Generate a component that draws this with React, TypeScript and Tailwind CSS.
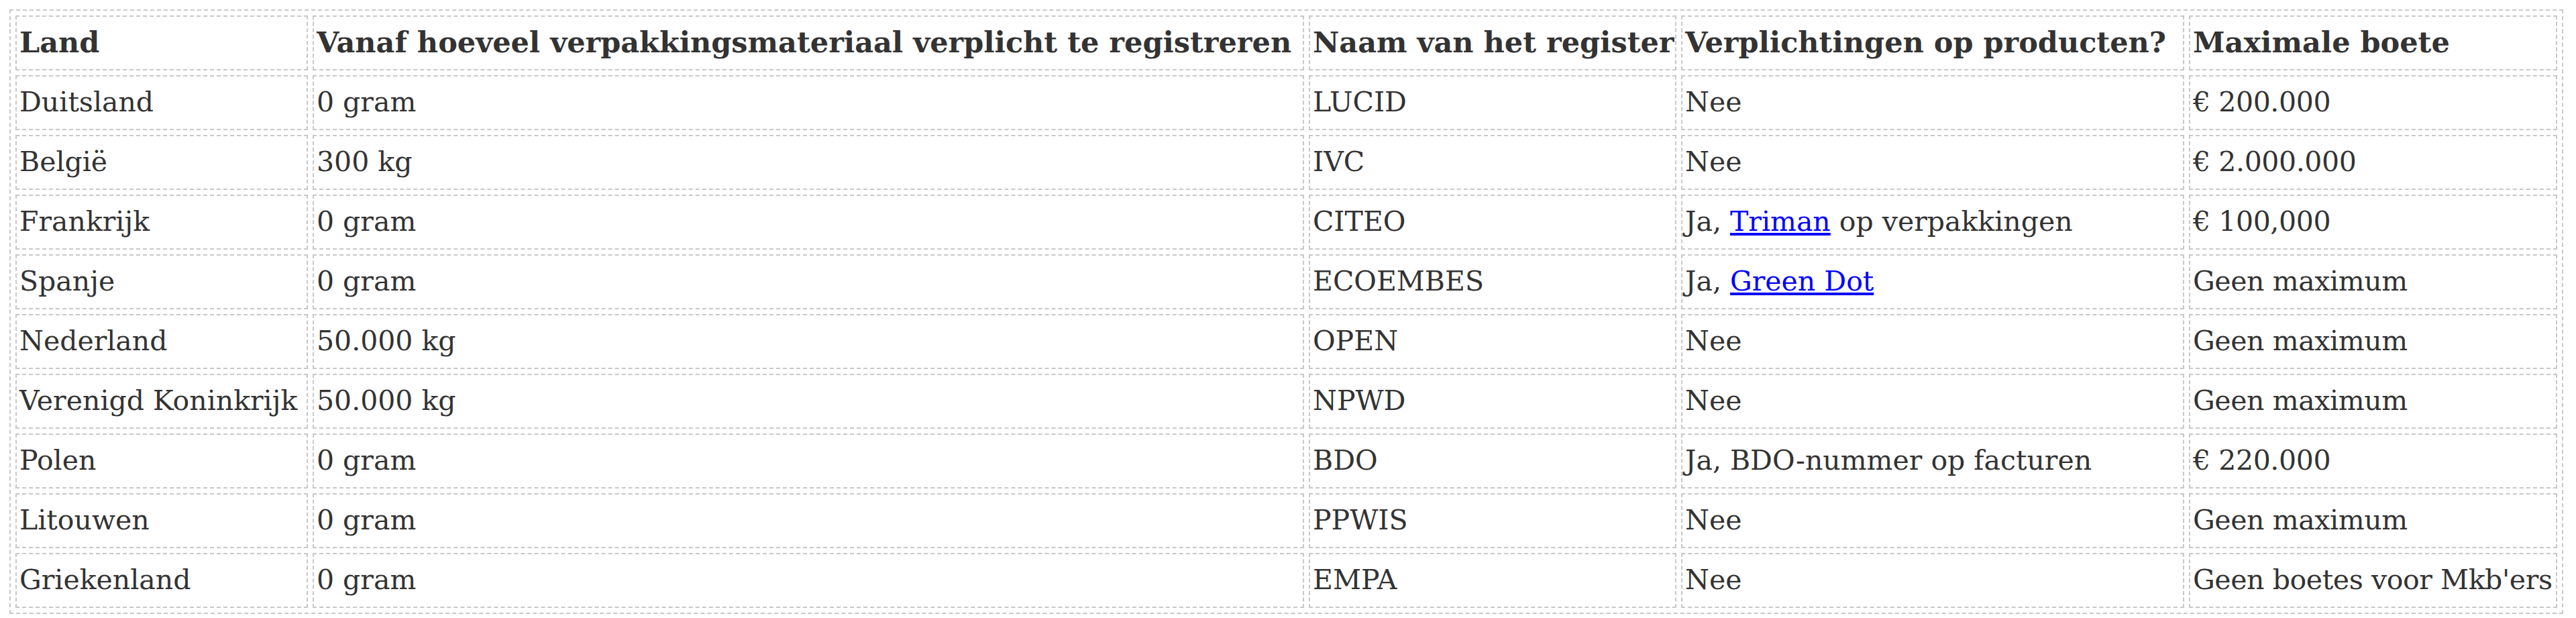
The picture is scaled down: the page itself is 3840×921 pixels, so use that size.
const rows: { land: string; vanaf: string; register: string; plicht: React.ReactNode; boete: string }[] = [
  { land: 'Duitsland', vanaf: '0 gram', register: 'LUCID', plicht: 'Nee', boete: '€ 200.000' },
  { land: 'België', vanaf: '300 kg', register: 'IVC', plicht: 'Nee', boete: '€ 2.000.000' },
  {
    land: 'Frankrijk',
    vanaf: '0 gram',
    register: 'CITEO',
    plicht: (
      <>
        Ja, <a href="#" className="text-[#0000ff] underline">Triman</a> op verpakkingen
      </>
    ),
    boete: '€ 100,000',
  },
  {
    land: 'Spanje',
    vanaf: '0 gram',
    register: 'ECOEMBES',
    plicht: (
      <>
        Ja, <a href="#" className="text-[#0000ff] underline">Green Dot</a>
      </>
    ),
    boete: 'Geen maximum',
  },
  { land: 'Nederland', vanaf: '50.000 kg', register: 'OPEN', plicht: 'Nee', boete: 'Geen maximum' },
  { land: 'Verenigd Koninkrijk', vanaf: '50.000 kg', register: 'NPWD', plicht: 'Nee', boete: 'Geen maximum' },
  { land: 'Polen', vanaf: '0 gram', register: 'BDO', plicht: 'Ja, BDO-nummer op facturen', boete: '€ 220.000' },
  { land: 'Litouwen', vanaf: '0 gram', register: 'PPWIS', plicht: 'Nee', boete: 'Geen maximum' },
  { land: 'Griekenland', vanaf: '0 gram', register: 'EMPA', plicht: 'Nee', boete: "Geen boetes voor Mkb'ers" },
];

const headers = [
  'Land',
  'Vanaf hoeveel verpakkingsmateriaal verplicht te registreren',
  'Naam van het register',
  'Verplichtingen op producten?',
  'Maximale boete',
];

const cell = 'h-[82px] border-2 border-dashed border-[#c8c8c8] px-[4px] py-0 align-middle whitespace-nowrap';

export default function App() {
  return (
    <div className="min-h-screen bg-white pt-[14px] pl-[14px] font-['DejaVu_Serif',serif] text-[41px] leading-[1.15] text-[#333]">
      <table className="w-[3807px] table-fixed border-separate border-spacing-[7px] border-2 border-dashed border-[#c8c8c8]">
        <colgroup>
          <col className="w-[436px]" />
          <col className="w-[1478px]" />
          <col className="w-[548px]" />
          <col className="w-[750px]" />
          <col className="w-[549px]" />
        </colgroup>
        <thead>
          <tr>
            {headers.map((h) => (
              <th key={h} className={`${cell} text-left text-[43px] font-bold`}>
                {h}
              </th>
            ))}
          </tr>
        </thead>
        <tbody>
          {rows.map((r) => (
            <tr key={r.land}>
              <td className={cell}>{r.land}</td>
              <td className={cell}>{r.vanaf}</td>
              <td className={cell}>{r.register}</td>
              <td className={cell}>{r.plicht}</td>
              <td className={`${cell} pr-0 tracking-[-0.4px]`}>{r.boete}</td>
            </tr>
          ))}
        </tbody>
      </table>
    </div>
  );
}
